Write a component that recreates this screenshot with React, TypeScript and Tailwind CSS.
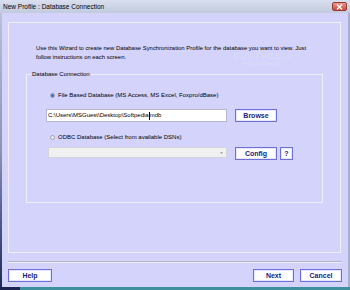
export default function App() {
  const btn =
    "h-[13px] bg-white border border-[#6f6fd9] shadow-[inset_0_0_0_1px_#e6e6ff] flex items-center justify-center text-[7px] font-bold text-[#1c1c78] leading-none";
  return (
    <div className="w-[350px] h-[290px] flex flex-col overflow-hidden bg-[#d3d3fb] font-['Liberation_Sans',Arial,sans-serif] text-black">
      {/* title bar */}
      <div className="h-[13px] flex items-center justify-between bg-gradient-to-b from-[#d9dfee] to-[#c2cadf] pl-[3px] pr-[3px]">
        <span className="text-[6.5px] leading-none mt-[1px]">New Profile : Database Connection</span>
        <div className="w-[15px] h-[9px] rounded-[2px] border border-[#9a3a34] bg-gradient-to-b from-[#e9998f] to-[#c54a3f] flex items-center justify-center">
          <svg width="7" height="6" viewBox="0 0 7 6">
            <path d="M1 0.5 L6 5.5 M6 0.5 L1 5.5" stroke="white" strokeWidth="1.4" />
          </svg>
        </div>
      </div>
      {/* middle */}
      <div className="flex-1 flex">
        <div className="w-[2px] bg-gradient-to-b from-[#b9c2d9] via-[#8a94b4] to-[#1f2a5a]" />
        <div className="flex-1 flex flex-col pt-[9px]">
          {/* outer panel */}
          <div className="relative ml-[6px] w-[333px] h-[231px] border border-[#eeeeff] flex flex-col">
            <div className="pl-[27px] pt-[21px] text-[5.9px] leading-[9px] whitespace-nowrap">
              Use this Wizard to create new Database Synchronization Profile for the database you want to view. Just
              <br />
              follow instructions on each screen.
            </div>
            <div className="absolute left-[224px] top-[29px] text-[9px] font-bold tracking-[1px] text-[#d9d9fa] leading-none">
              SOFTPEDIA
            </div>
            <div className="absolute left-[234px] top-[39px] text-[4.5px] text-[#dcdcfa] leading-none">
              www.softpedia.com
            </div>
            <fieldset className="mt-[9px] mx-[17px] h-[132px] border border-[#eeeeff] px-[0px]">
              <legend className="ml-[4px] px-[1px] text-[6px] leading-[7px]">Database Connection</legend>
              <div className="flex items-center mt-[13px] ml-[23px] h-[8px]">
                <div className="w-[5px] h-[5px] rounded-full border border-[#8f8f9f] bg-[#f4f4f4] flex items-center justify-center">
                  <div className="w-[3px] h-[3px] rounded-full bg-[#2a6fd0]" />
                </div>
                <span className="ml-[3px] text-[6px] leading-none">File Based Database (MS Access, MS Excel, Foxpro/dBase)</span>
              </div>
              <div className="flex items-center mt-[10px] ml-[19px]">
                <div className="w-[181px] h-[13px] bg-white border border-[#b7b7d0] flex items-center pl-[1px] text-[6px] whitespace-nowrap">
                  C:\Users\MSGuest\Desktop\Softpedia<span className="inline-block w-[1px] h-[8px] bg-black" />mdb
                </div>
                <div className={btn + " ml-[8px] w-[42px]"}>Browse</div>
              </div>
              <div className="flex items-center mt-[11px] ml-[23px] h-[8px]">
                <div className="w-[5px] h-[5px] rounded-full border border-[#9f9faf] bg-[#ececec]" />
                <span className="ml-[3px] text-[6px] leading-none">ODBC Database (Select from available DSNs)</span>
              </div>
              <div className="flex items-start mt-[6px] ml-[21px]">
                <div className="w-[179px] h-[11px] bg-[#f0f0f0] border border-[#d4d4dc] flex items-center justify-end pr-[3px]">
                  <svg width="3" height="2" viewBox="0 0 3 2">
                    <path d="M0 0 L3 0 L1.5 2 Z" fill="#a0a0a8" />
                  </svg>
                </div>
                <div className={btn + " ml-[8px] w-[42px]"}>Config</div>
                <div className={btn + " ml-[3px] w-[13px]"}>?</div>
              </div>
            </fieldset>
          </div>
          {/* separator */}
          <div className="mt-[8px] ml-[6px] w-[334px] h-[2px] border-t border-[#b4b4cc] border-b border-b-[#ececff]" />
          {/* buttons */}
          <div className="mt-[6px] ml-[6px] flex">
            <div className={btn + " w-[44px]"}>Help</div>
            <div className={btn + " ml-[201px] w-[41px]"}>Next</div>
            <div className={btn + " ml-[6px] w-[42px]"}>Cancel</div>
          </div>
        </div>
        <div className="w-[2px] bg-[#a6b1cc]" />
      </div>
      <div className="h-[3px] flex">
        <div className="w-[20px] bg-[#1c2552]" />
        <div className="flex-1 bg-[#3f909e]" />
      </div>
    </div>
  );
}
